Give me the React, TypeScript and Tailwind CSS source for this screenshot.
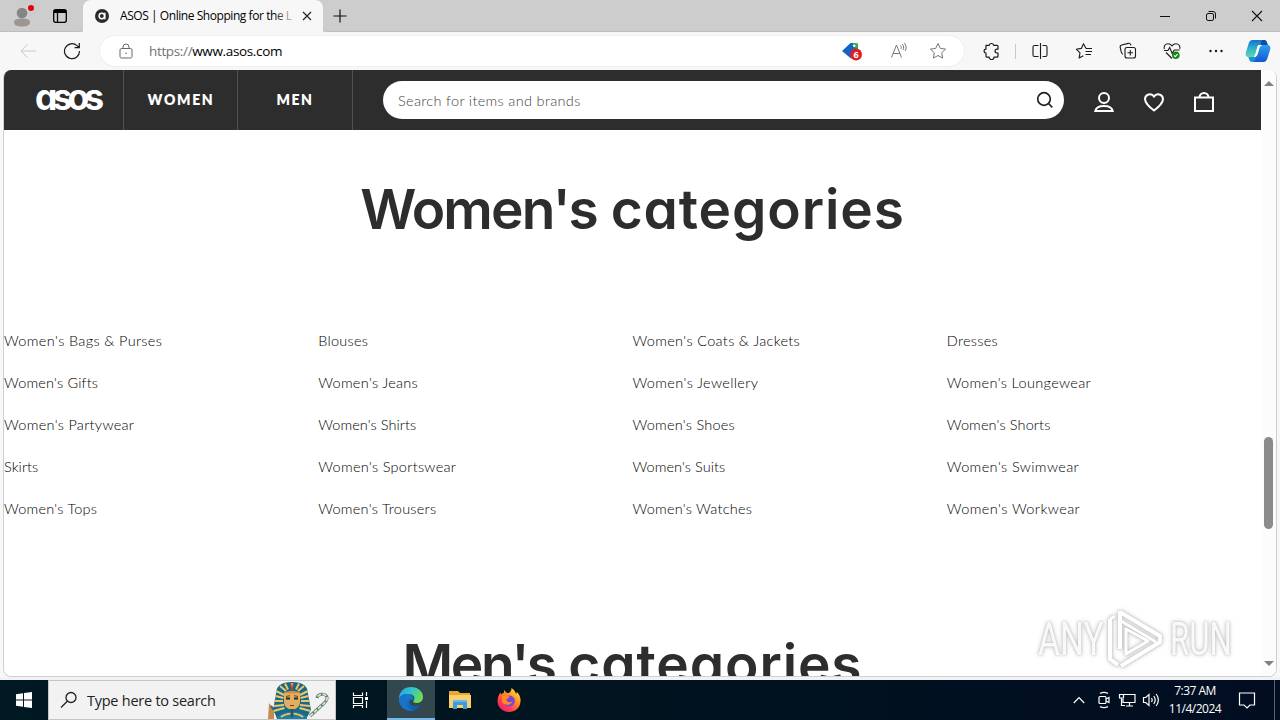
import React from 'react';

const columns: { label: string; track: string }[][] = [
  [
    { label: "Women's Bags & Purses", track: 'tracking-[0.35px]' },
    { label: "Women's Gifts", track: 'tracking-[0.17px]' },
    { label: "Women's Partywear", track: 'tracking-[0.29px]' },
    { label: 'Skirts', track: 'tracking-[0.05px]' },
    { label: "Women's Tops", track: 'tracking-[0.22px]' },
  ],
  [
    { label: 'Blouses', track: 'tracking-[0.25px]' },
    { label: "Women's Jeans", track: 'tracking-[0.28px]' },
    { label: "Women's Shirts", track: 'tracking-[0.05px]' },
    { label: "Women's Sportswear", track: 'tracking-[0.29px]' },
    { label: "Women's Trousers", track: 'tracking-[0.25px]' },
  ],
  [
    { label: "Women's Coats & Jackets", track: 'tracking-[0.32px]' },
    { label: "Women's Jewellery", track: 'tracking-[0.35px]' },
    { label: "Women's Shoes", track: 'tracking-[0.22px]' },
    { label: "Women's Suits", track: 'tracking-[0.05px]' },
    { label: "Women's Watches", track: 'tracking-[0.22px]' },
  ],
  [
    { label: 'Dresses', track: 'tracking-[0.3px]' },
    { label: "Women's Loungewear", track: 'tracking-[0.33px]' },
    { label: "Women's Shorts", track: 'tracking-[0.12px]' },
    { label: "Women's Swimwear", track: 'tracking-[0.38px]' },
    { label: "Women's Workwear", track: 'tracking-[0.42px]' },
  ],
];

function Icon({ children, w = 20, h = 20, className = '', sw = 1 }: { children: React.ReactNode; w?: number; h?: number; className?: string; sw?: number }) {
  return (
    <svg width={w} height={h} viewBox={`0 0 ${w} ${h}`} fill="none" stroke="currentColor" strokeWidth={sw} className={`block shrink-0 ${className}`}>
      {children}
    </svg>
  );
}

function TabStrip() {
  return (
    <div className="flex h-8 bg-[#cdcdcd]">
      <div className="flex w-[83px] items-center rounded-br-md border-b border-[#bdbdbd] pl-3">
        <Icon w={24} h={26}>
          <g stroke="none">
            <circle cx="10" cy="10" r="5.3" fill="#858585" />
            <path d="M2 19.5c0-3 3-4 8-4s8 1 8 4c0 2.800-3.500 4-8 4s-8-1.200-8-4z" fill="#9b9690" />
            <circle cx="19" cy="5" r="3" fill="#e3000f" />
          </g>
        </Icon>
        <Icon w={16} h={16} className="ml-4" sw={1.3}>
          <rect x="1.700" y="1.700" width="12.600" height="12.600" rx="2" />
          <path d="M2 3.500h12" strokeWidth="3" />
          <path d="M5.500 4v10" />
        </Icon>
      </div>
      <div className="flex w-[240px] items-center rounded-t-lg bg-[#f7f7f7] pl-3">
        <Icon w={14} h={14}>
          <circle cx="7" cy="7" r="7" fill="#2b2b2b" stroke="none" />
          <circle cx="6.800" cy="7" r="2.700" stroke="#fff" strokeWidth="1.500" />
          <path d="M9.800 3.700v6.600" stroke="#fff" strokeWidth="1.500" />
        </Icon>
        <div className="relative ml-[11px] w-[174px] whitespace-nowrap text-[12px] tracking-[-0.44px] text-black">
          ASOS | Online Shopping for the L
          <div className="absolute inset-y-0 right-0 w-5 bg-gradient-to-r from-[#f7f7f7]/0 to-[#f7f7f7]/90" />
        </div>
        <Icon w={10} h={10} className="ml-[8px] text-[#222]" sw={1.2}>
          <path d="M1 1l8 8M9 1L1 9" />
        </Icon>
      </div>
      <div className="flex flex-1 items-center rounded-bl-md border-b border-[#bdbdbd] pl-[10px] text-[#111]">
        <Icon w={14} h={14} sw={1.2}>
          <path d="M7 .5v13M.5 7h13" />
        </Icon>
        <div className="ml-auto flex items-center gap-[34px] pr-[17px]">
          <Icon w={12} h={12}><path d="M1 6.500h10" /></Icon>
          <Icon w={12} h={12}>
            <rect x="1.500" y="3.500" width="7" height="7" rx="1.500" />
            <path d="M3.500 1.500H8a2.500 2.500 0 0 1 2.500 2.500v4.500" />
          </Icon>
          <Icon w={12} h={12} sw={1.1}><path d="M1 1l10 10M11 1L1 11" /></Icon>
        </div>
      </div>
    </div>
  );
}

function Copilot() {
  return (
    <svg width="26" height="24" viewBox="0 0 26 24" className="block shrink-0">
      <defs>
        <linearGradient id="cpa" x1="0" y1="0" x2="0" y2="1">
          <stop offset="0" stopColor="#1a6fd0" />
          <stop offset=".45" stopColor="#2aaecf" />
          <stop offset="1" stopColor="#5fd9a8" />
        </linearGradient>
        <linearGradient id="cpb" x1="0" y1="0" x2="0" y2="1">
          <stop offset="0" stopColor="#2f9ff0" />
          <stop offset="1" stopColor="#1058d0" />
        </linearGradient>
      </defs>
      <path d="M15 1h4.500c1.700 0 2.300 1.500 2.800 3.200.5 1.800.9 2.300 2 2.300h-9z" fill="#0b4da8" />
      <path d="M11 23H7c-2 0-2.500-1.500-3-3.200-.4-1.400-.8-2.300-2-2.300h9z" fill="#1d8ed8" />
      <path d="M7.500 1H18c-1.400.5-2 2-2.600 4L12 16c-.6 1.600-1.400 2-3 2H4c-3 0-4-2-3-5l2.500-8C4.300 2.300 5.500 1 7.500 1z" fill="url(#cpa)" />
      <path d="M18.500 23H8c1.400-.5 2-2 2.600-4L14 8c.6-1.600 1.400-2 3-2h5c3 0 4 2 3 5l-2.500 8c-.8 2.700-2 4-4 4z" fill="url(#cpb)" />
      <path d="M13.800 6.500h1.700c-.9.500-1.200 1.200-1.600 2.400l-1.600 5.600c-.6 1.900-1.200 2.700-2.600 3H9.200c1-.5 1.300-1.200 1.700-2.400l1.600-5.600c.3-1.200.6-2.400 1.300-3z" fill="#fff" stroke="#fff" strokeWidth="1.200" />
    </svg>
  );
}

function Toolbar() {
  return (
    <div className="flex h-[38px] items-center bg-[#f7f7f7] pr-[9px] text-[#1b1b1b]">
      <Icon w={18} h={16} className="ml-[19px] text-[#c9c9c9]"><path d="M17 8H2M8.500 1.500L2 8l6.500 6.500" /></Icon>
      <Icon w={18} h={18} className="ml-[26px]" sw={1.2}>
        <path d="M16.500 9A7.500 7.500 0 1 1 14 3.600L16 5.500M16.300 1v4.700h-4.700" />
      </Icon>
      <div className="ml-[19px] flex h-[30px] w-[864px] items-center rounded-full bg-white pl-[19px] pr-[17px] shadow-[0_0_2px_#ddd]">
        <Icon w={14} h={16} className="text-[#666]">
          <rect x="1" y="5.500" width="12" height="9.500" rx="1.500" />
          <path d="M4 5.500V4a3 3 0 0 1 6 0v1.500" />
          <circle cx="7" cy="10.300" r=".8" fill="currentColor" stroke="none" />
        </Icon>
        <div className="ml-4 whitespace-nowrap text-[13.500px] tracking-[-0.35px] text-black"><span className="text-[#727272]">https://</span>www.asos.com</div>
        <div className="ml-auto flex items-center">
          <svg width="20" height="20" viewBox="0 0 20 20" className="mr-[28px] block">
            <path d="M0 10l8-7.500c.6-.5 1-.6 2-.5l5 .4 1 5.600-7 9.500z" fill="#1565c0" />
            <path d="M10 1.800l6 .8v6l-3-1.400z" fill="#35a853" />
            <circle cx="12.200" cy="4.800" r="1.300" fill="#fff" />
            <circle cx="14" cy="13.500" r="6" fill="#d92323" />
            <text x="11.500" y="17" fontSize="9" fontWeight="700" fill="#fff" fontFamily="Open Sans">6</text>
          </svg>
          <Icon w={18} h={18} className="mr-[21px] text-[#777]">
            <path d="M1.500 15.500L6.500 3l5 12.500M3.200 11.500h6.600M10.500 3.500c1 1 1 2.500.4 3.500M12.300 2c1.600 1.700 1.700 4.200.7 6M14.200.8c2.200 2.200 2.500 5.700 1 8.200" />
          </Icon>
          <Icon w={18} h={18} className="text-[#777]">
            <path strokeLinejoin="round" d="M9 1.500l2.300 4.900 5.300.7-3.900 3.700 1 5.300L9 13.500l-4.700 2.600 1-5.300L1.400 7.100l5.300-.7z" />
          </Icon>
        </div>
      </div>
      <div className="flex flex-1 items-center pl-[19px]">
        <Icon w={18} h={18} sw={1.2}>
          <path strokeLinejoin="round" d="M3 3.300h3.200a2.300 2.300 0 0 1 4.500 0H14a1 1 0 0 1 1 1v2.900h-1a1.900 1.900 0 0 0 0 3.800h1v3.200a1 1 0 0 1-1 1h-3a2.300 2.300 0 0 1-4.800 0H4a1 1 0 0 1-1-1V11a1.900 1.900 0 0 1 0-3.800z" />
        </Icon>
        <div className="ml-[14px] h-[15px] w-px bg-[#c8c8c8]" />
        <Icon w={18} h={18} className="ml-[15px]" sw={1.1}>
          <path d="M7.500 3.500h-4a1.500 1.500 0 0 0-1.500 1.500v8a1.500 1.500 0 0 0 1.500 1.500h4M9.500 1v16M11.500 3.500h3A1.500 1.500 0 0 1 16 5v8a1.500 1.500 0 0 1-1.500 1.500h-3" />
        </Icon>
        <Icon w={18} h={18} className="ml-[26px]" sw={1.1}>
          <path strokeLinejoin="round" d="M11 6.400L8.500 1.800 6.300 6.400 1.300 7.200l3.700 3.600-.9 5.200 4.200-2.300M11 6.500h6M10.500 9.500H17M10.500 12.500H16" />
        </Icon>
        <Icon w={18} h={18} className="ml-[26px]" sw={1.1}>
          <rect x="6" y="5.500" width="10.500" height="10.500" rx="2" />
          <path d="M11.300 8v5.500M8.500 10.700H14M4 12.200C2.800 11.800 2.600 11 2.300 10L1.200 5.500C.9 4 1.500 3.300 2.700 3l6.500-1.600c1.600-.4 2.300.3 2.700 2" />
        </Icon>
        <Icon w={18} h={18} className="ml-[26px]" sw={1.1}>
          <path d="M1.300 7C.5 4 2.300 1.800 5 1.800c1.800 0 3 .8 4 2 1-1.200 2.200-2 4-2 2.700 0 4.500 2.200 3.800 5M3 10.500l6 6M1 8.500h4l1.700-3 2.500 6 2-3.500h5.500" />
          <circle cx="12.800" cy="13.300" r="3.800" fill="#138a13" stroke="none" />
          <path d="M11 13.300l1.300 1.300 2.300-2.600" stroke="#fff" />
        </Icon>
        <Icon w={18} h={18} className="ml-[26px]">
          <g fill="currentColor" stroke="none"><circle cx="3.500" cy="9" r="1.200" /><circle cx="9" cy="9" r="1.200" /><circle cx="14.500" cy="9" r="1.200" /></g>
        </Icon>
        <div className="ml-auto"><Copilot /></div>
      </div>
    </div>
  );
}

function SiteHeader() {
  return (
    <header className="flex h-[60px] shrink-0 bg-[#2d2d2d] text-white">
      <div className="flex w-[120px] border-r border-[#525252] pl-[31px]">
        <div className="mt-[3px] font-['Inter'] text-[35.500px] font-bold leading-[50px] tracking-[-4.900px] [font-feature-settings:'cv11']">asos</div>
      </div>
      <div className="flex w-[114px] items-center justify-center border-r border-[#525252] pb-px pl-px font-['Lato'] text-[14px] font-extrabold tracking-[1.700px]">WOMEN</div>
      <div className="flex w-[115px] items-center justify-center border-r border-[#525252] pb-px font-['Lato'] text-[14px] font-extrabold tracking-[1.500px]">MEN</div>
      <div className="ml-[30px] mt-[11px] flex h-[38px] w-[681px] items-center rounded-full bg-white pl-[15px] pr-[10px] font-['Lato'] text-[14.500px] font-light tracking-[0.33px] text-[#444]">
        <span className="pt-[2px]">Search for items and brands</span>
        <Icon w={18} h={18} className="ml-auto text-[#222]" sw={1.7}>
          <circle cx="8" cy="8" r="6.300" />
          <path d="M12.500 12.500l3.800 3.800" />
        </Icon>
      </div>
      <div className="ml-[29px] mt-[21px] flex gap-[28px]">
        <Icon w={22} h={22} sw={2}>
          <circle cx="11" cy="7" r="5" />
          <path d="M2.300 20c.7-3.200 4-5 8.700-5s8 1.800 8.700 5z" />
        </Icon>
        <Icon w={22} h={22} sw={2}>
          <path d="M11 19.500C7 16.500 2 12.500 2 8a4.900 4.900 0 0 1 9-2.500A4.900 4.900 0 0 1 20 8c0 4.500-5 8.500-9 11.500z" />
        </Icon>
        <Icon w={22} h={22} sw={2}>
          <path d="M2 6.500h18V20H2zM6.500 6.500a4.500 4.500 0 0 1 9 0" />
        </Icon>
      </div>
    </header>
  );
}

function Watermark() {
  return (
    <div className="absolute bottom-[5px] right-[42px] flex h-16 w-[198px] items-center justify-between font-['Roboto'] text-[46px] font-normal text-white/90 [filter:drop-shadow(0_0_1px_#bbb)_drop-shadow(0_0_2px_#ccc)]">
      <div className="w-[64px] pl-[2px]"><div className="w-max origin-left scale-x-[0.73]">ANY</div></div>
      <svg width="58" height="64" viewBox="0 0 58 64" fill="none" stroke="#fff" strokeWidth="4" strokeLinejoin="round" className="block shrink-0">
        <path d="M14 4v38M14 5l40 24v6L15 59M4 12v40l8 6" />
        <path d="M20 22v25l22-13zM15 14l35 21M4 12l5-3" strokeWidth="3" />
      </svg>
      <div className="w-[64px]"><div className="w-max origin-left scale-x-[0.68]">RUN</div></div>
    </div>
  );
}

function Page() {
  return (
    <div className="relative mx-[3px] flex h-[607px] overflow-hidden rounded-lg border border-[#d0d0d0] border-t-0 bg-white">
      <div className="flex w-[1257px] flex-col overflow-hidden">
        <SiteHeader />
        <h2 className="mt-[43px] h-[72px] whitespace-nowrap text-center font-['Inter'] text-[55px] font-semibold leading-[72px] text-[#2d2d2d] [font-feature-settings:'cv11']">
          <span className="tracking-[-1.850px]">Women's</span> <span className="tracking-[0.900px]">categories</span>
        </h2>
        <div className="mt-[75px] grid grid-cols-4 font-['Lato'] text-[14.500px] font-light text-black">
          {columns.map((col, i) => (
            <ul key={i} className="flex flex-col">
              {col.map((c) => (
                <li key={c.label} className={`h-[42px] whitespace-nowrap leading-[42px] ${c.track}`}>{c.label}</li>
              ))}
            </ul>
          ))}
        </div>
        <h2 className="mt-[98px] h-[72px] shrink-0 whitespace-nowrap text-center font-['Inter'] text-[55px] font-semibold leading-[72px] text-[#2d2d2d] [font-feature-settings:'cv11']">
          <span className="tracking-[-2.400px]">Men's</span> <span className="tracking-[0.900px]">categories</span>
        </h2>
      </div>
      <div className="flex flex-1 flex-col items-center bg-[#fcfcfc] pt-[10px] text-[#808080]">
        <Icon w={10} h={6}><path d="M0 6l5-5 5 5z" fill="currentColor" stroke="none" /></Icon>
        <div className="mt-[351px] h-[92px] w-[9px] rounded-full bg-[#8b8b8b]" />
        <Icon w={10} h={6} className="mt-[132px]"><path d="M0 0l5 5 5-5z" fill="currentColor" stroke="none" /></Icon>
      </div>
      <Watermark />
    </div>
  );
}

function Pharaoh() {
  return (
    <svg width="64" height="38" viewBox="0 0 64 38" className="block">
      <path d="M2 38l1-16 5 6v10z" fill="#c98a4a" />
      <path d="M5 25l5 7 2 6" stroke="#1d6d91" strokeWidth="2" fill="none" />
      <path d="M26 1C15 1 10 5 10 13L7 29l5 9h28l5-9-3-16C42 5 37 1 26 1z" fill="#17698a" />
      <path d="M14 5l6 5M10 10l8 4M9.500 15l8 2M9 20h8M8 25l10-1M7.500 30l11-3M38 5l-6 5M42 10l-8 4M42.500 15l-8 2M43 20h-8M44 25l-10-1M44.500 30l-11-3M19 2.500l3 6M33 2.500l-3 6" stroke="#ecc568" strokeWidth="2" />
      <path d="M18 12c4-2.500 12-2.500 16 0v9c0 4-3.500 7.500-8 7.500S18 25 18 21z" fill="#e3ad5f" />
      <path d="M18.500 11.500h15" stroke="#d98b35" strokeWidth="1.500" />
      <path d="M20 15.500l4-.8M28 14.700l4 .8M24 24.500h4" stroke="#70401e" />
      <path d="M20 17.500h4M28 17.500h4" stroke="#172f3b" strokeWidth="1.800" />
      <path d="M24.500 2l1.500 8 1.500-8" fill="#dfb643" stroke="#b0432d" />
      <path d="M11 36c7-7 23-7 30 0v2H11z" fill="#217ea3" />
      <path d="M15 36c6-4.500 16-4.500 22 0" stroke="#edc060" strokeWidth="1.800" fill="none" />
      <path d="M24.500 28h3v8h-3z" fill="#2d566b" />
      <path d="M44 35l11-10c4-3 6-5 6-8 0-5-9-5-10 0" fill="none" stroke="#56817f" strokeWidth="3.200" />
      <path d="M44 35l11-10c4-3 6-5 6-8 0-5-9-5-10 0" fill="none" stroke="#e9dfbd" strokeWidth="1.800" strokeDasharray="4 1.500" />
    </svg>
  );
}

function EdgeLogo() {
  return (
    <svg width="24" height="24" viewBox="0 0 24 24" className="block">
      <defs>
        <linearGradient id="eg" x1="0" y1="0" x2="1" y2=".4"><stop stopColor="#279ee8" /><stop offset=".55" stopColor="#34c5c7" /><stop offset="1" stopColor="#6bdc56" /></linearGradient>
        <linearGradient id="eb" x1="0" y1="0" x2="1" y2="1"><stop stopColor="#1a8be0" /><stop offset="1" stopColor="#0c4fa0" /></linearGradient>
      </defs>
      <path d="M0 12C0 4.500 5 0 12 0s12 4.500 12 10c0 4-3 6-6.500 6-3 0-3.800-1.300-3-2.300C17 10 14 7 9.500 7 5 7 1.500 9 0 12z" fill="url(#eg)" />
      <path d="M0 12c1-4 5-5.500 9-5 4.500.5 6.700 4 5 6.200-3-1.200-4.500 1-3.500 3.300C12 19.500 17 20 21.500 18 19.500 22 16 24 12 24 5 24 0 19 0 12z" fill="url(#eb)" />
      <path d="M9.500 7C5.500 9 5 13 7 17c1.500 3.500 5 6 9 6-8 2.500-16-3-16-11 1.500-4 5-5.500 9.500-5z" fill="#1673c9" />
    </svg>
  );
}

function FolderLogo() {
  return (
    <svg width="22" height="20" viewBox="0 0 22 20" className="block">
      <path d="M0 1h9l2 2h10v15H0z" fill="#e9a833" />
      <path d="M0 5h22v13H0z" fill="#fbd06c" />
      <path d="M4 10h14v9h-4v-4H8v4H4z" fill="#3d9be0" />
      <path d="M4 10h14v2H4z" fill="#65b7ed" />
    </svg>
  );
}

function FirefoxLogo() {
  return (
    <svg width="24" height="24" viewBox="0 0 24 24" className="block">
      <defs><linearGradient id="ff" x1="1" y1="0" x2=".2" y2="1"><stop stopColor="#fff14a" /><stop offset=".4" stopColor="#ff9a22" /><stop offset=".75" stopColor="#ff3d4d" /><stop offset="1" stopColor="#e5206e" /></linearGradient></defs>
      <path d="M14.500 0c3 2 4 4 4.500 6l1-2c2.500 2.500 4 6 3.500 9.500C23 20 18 24 12 24S.5 19.500.5 13c0-3 1-6 3-8.500l.7 2C5 5.500 6 5 7 4.800L7 2l3 3c1.500.2 2.500-.2 3-1 .8-1 1.500-2 1.500-4z" fill="url(#ff)" />
      <circle cx="12.300" cy="13" r="5.600" fill="#7a45d6" />
      <path d="M5 8c3-1.500 5 0 7.500.5-.5 2-3 2-3 3.500 0 2 3 3 6 1.500-1.500 4-8 4.500-10.500.5z" fill="#ff8a25" />
    </svg>
  );
}

function Taskbar() {
  return (
    <div className="flex h-10 bg-gradient-to-r from-[#001922] via-[#00131f] to-[#020d21] text-white">
      <div className="flex w-12 items-center justify-center">
        <svg width="16" height="16" viewBox="0 0 16 16" fill="#fff"><path d="M0 2.200l7-1v6.300H0zM8 1l8-1v7.500H8zM0 8.500h7v6.300l-7-1zM8 8.500h8V16l-8-1z" /></svg>
      </div>
      <div className="flex w-72 items-center border border-[#c5c5c5] bg-[#f2f2f2] pl-[11px] pr-[5px] text-[#222]">
        <Icon w={18} h={18} sw={1.3}>
          <circle cx="11" cy="6.500" r="5" />
          <path d="M7.300 10.200L1 16.500" />
        </Icon>
        <div className="ml-[9px] whitespace-nowrap pt-[2px] text-[14.500px] tracking-[-0.25px]">Type here to search</div>
        <div className="ml-auto"><Pharaoh /></div>
      </div>
      <div className="flex w-[51px] items-center justify-center pr-[4px]">
        <Icon w={18} h={18} sw={1.2}>
          <path d="M2.500 1.500v3h9v-3M2.500 6.500h9v6h-9zM2.500 17v-2.500h9V17M15.500 1v4M15.500 10v7" />
          <path d="M14 6h3v3h-3z" fill="#fff" stroke="none" />
        </Icon>
      </div>
      <div className="flex w-12 items-center justify-center border-b-2 border-[#76b9ed] bg-[#33474f]"><EdgeLogo /></div>
      <div className="flex w-[50px] items-center justify-center"><FolderLogo /></div>
      <div className="flex w-12 items-center justify-center"><FirefoxLogo /></div>
      <div className="ml-auto flex items-center">
        <Icon w={12} h={8} sw={1.2}><path d="M.8 7L6 1.500 11.200 7" /></Icon>
        <Icon w={14} h={18} className="ml-[12px]" sw={1.2}>
          <rect x="2" y="5.500" width="7" height="7" rx="1" />
          <path d="M9 8l3-1.500v5L9 10M3 2.500c2.500-1.500 5.500-1.500 8 0M3 15.500c2.500 1.500 5.500 1.500 8 0" />
        </Icon>
        <Icon w={18} h={16} className="ml-[7px]" sw={1.2}>
          <path d="M6 2.500h11v8H5V7M8 14h7M11.500 10.500V14M1.500 2.500h4v3.500h-4zM3.500 6v7.500H7" />
        </Icon>
        <Icon w={18} h={16} className="ml-[6px]" sw={1.2}>
          <path d="M1.500 5.500h2.200L7 2.500v11l-3.300-3H1.500zM9.500 6c.8 1.200.8 2.800 0 4M11.800 4c1.700 2.400 1.700 5.600 0 8M14.200 2c2.600 3.600 2.600 8.400 0 12" />
        </Icon>
        <div className="ml-[8px] w-[54px] whitespace-nowrap text-center text-[12px] leading-[18px] tracking-[-0.5px]">
          <div>7:37 AM</div>
          <div>11/4/2024</div>
        </div>
        <Icon w={18} h={18} className="ml-[16px]" sw={1.2}><path d="M1.500 2h15v12H12l-3 3-3-3H1.500z" /></Icon>
        <div className="ml-[18px] h-10 w-px bg-[#58616c]" />
        <div className="w-[5px]" />
      </div>
    </div>
  );
}

export default function App() {
  return (
    <div className="flex h-[720px] w-[1280px] flex-col overflow-hidden bg-[#f7f7f7] font-['Open_Sans',sans-serif]">
      <TabStrip />
      <Toolbar />
      <Page />
      <div className="h-[3px] bg-[#f0f2f3]" />
      <Taskbar />
    </div>
  );
}
